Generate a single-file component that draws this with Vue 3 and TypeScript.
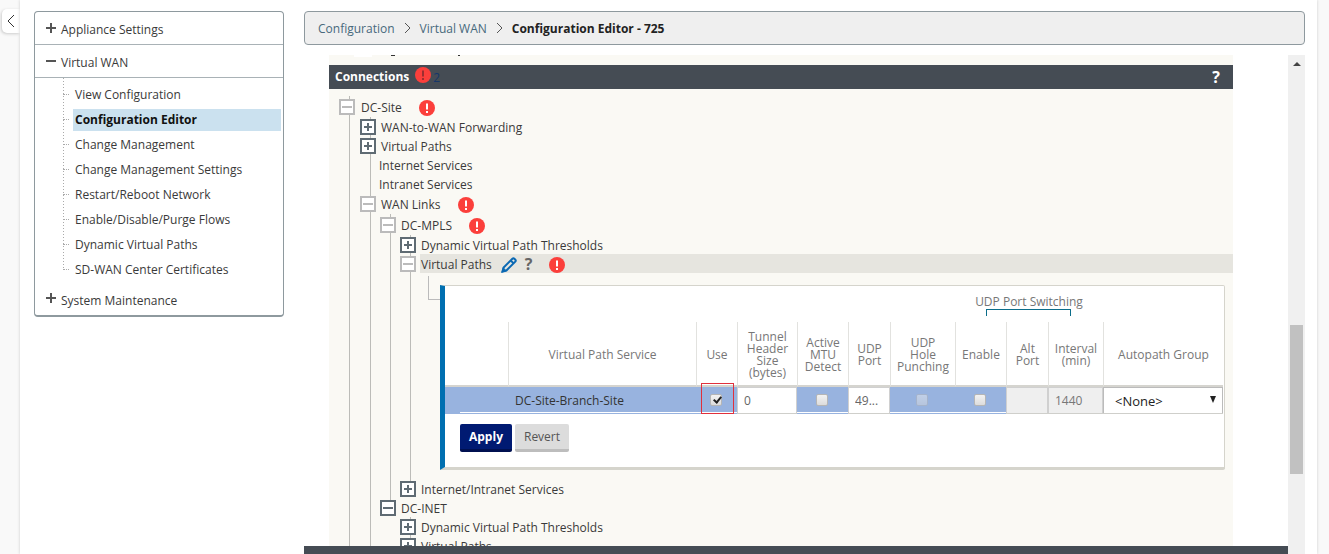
<script setup lang="ts">
import { ref } from 'vue'

type Toggle = 'open' | 'closed' | 'leaf'

interface TreeRow {
  id: string
  label: string
  toggle: Toggle
  /** One entry per ancestor level: true when its guide line runs past this row. */
  guides: boolean[]
  dark?: boolean
  last?: boolean
  tall?: boolean
  error?: boolean
  selected?: boolean
}

const navItems = [
  'View Configuration',
  'Configuration Editor',
  'Change Management',
  'Change Management Settings',
  'Restart/Reboot Network',
  'Enable/Disable/Purge Flows',
  'Dynamic Virtual Paths',
  'SD-WAN Center Certificates',
]
const activeItem = 'Configuration Editor'

const rows: TreeRow[] = [
  { id: 'site', label: 'DC-Site', toggle: 'open', guides: [], tall: true, error: true },
  { id: 'wan2wan', label: 'WAN-to-WAN Forwarding', toggle: 'closed', guides: [true], dark: true },
  { id: 'vpaths', label: 'Virtual Paths', toggle: 'closed', guides: [true], dark: true },
  { id: 'internet', label: 'Internet Services', toggle: 'leaf', guides: [true] },
  { id: 'intranet', label: 'Intranet Services', toggle: 'leaf', guides: [true] },
  { id: 'links', label: 'WAN Links', toggle: 'open', guides: [true], tall: true, error: true },
  { id: 'mpls', label: 'DC-MPLS', toggle: 'open', guides: [true, true], tall: true, error: true },
  { id: 'mpls-dyn', label: 'Dynamic Virtual Path Thresholds', toggle: 'closed', guides: [true, true, true], dark: true },
  { id: 'mpls-vp', label: 'Virtual Paths', toggle: 'open', guides: [true, true, true], error: true, selected: true },
  { id: 'mpls-ii', label: 'Internet/Intranet Services', toggle: 'closed', guides: [true, true, true], dark: true, last: true },
  { id: 'inet', label: 'DC-INET', toggle: 'open', guides: [true, true], dark: true, last: true },
  { id: 'inet-dyn', label: 'Dynamic Virtual Path Thresholds', toggle: 'closed', guides: [true, true, false], dark: true },
  { id: 'inet-vp', label: 'Virtual Paths', toggle: 'closed', guides: [true, true, false], dark: true },
]

const use = ref(true)
const mtu = ref(false)
const udpEnable = ref(false)
const tunnel = ref('0')
const port = ref('49...')
const interval = ref('1440')
const group = ref('<None>')
</script>

<template>
  <div class="page">
    <div class="rail">
      <button class="collapse" type="button" aria-label="Collapse">
        <svg width="8" height="14" viewBox="0 0 8 14"><path d="M7 1 L1 7 L7 13" /></svg>
      </button>
    </div>
    <div class="sheet">
      <nav class="sidebar">
        <button class="section" type="button">
          <svg width="10" height="10" viewBox="0 0 10 10"><path d="M0 5H10M5 0V10" /></svg>
          Appliance Settings
        </button>
        <button class="section open" type="button">
          <svg width="10" height="10" viewBox="0 0 10 10"><path d="M0 5H10" /></svg>
          Virtual WAN
        </button>
        <ul class="items">
          <li v-for="item in navItems" :key="item">
            <a href="#" :class="{ active: item === activeItem }">{{ item }}</a>
          </li>
        </ul>
        <button class="section bottom" type="button">
          <svg width="10" height="10" viewBox="0 0 10 10"><path d="M0 5H10M5 0V10" /></svg>
          System Maintenance
        </button>
      </nav>

      <main class="main">
        <nav class="crumbs" aria-label="Breadcrumb">
          <a href="#">Configuration</a>
          <svg width="7" height="12" viewBox="0 0 7 12"><path d="M1 1 L6 6 L1 11" /></svg>
          <a href="#">Virtual WAN</a>
          <svg width="7" height="12" viewBox="0 0 7 12"><path d="M1 1 L6 6 L1 11" /></svg>
          <strong>Configuration Editor - 725</strong>
        </nav>

        <div class="work">
          <div class="column">
            <div class="viewport">
              <div class="editor">
                <div class="peek">
                  <svg width="140" height="2" viewBox="0 0 140 2">
                    <rect class="patch" x="25" y="0" width="18" height="2" />
                    <path d="M62 0.5H66M129 0.5H131" />
                  </svg>
                </div>
                <div class="bar">
                  <h2>Connections</h2>
                  <svg class="alert dim" width="16" height="16" viewBox="0 0 16 16">
                    <circle cx="8" cy="8" r="8" /><path d="M8 3.5V9.5M8 11V13" />
                  </svg>
                  <span class="count">2</span>
                  <button type="button" class="help" aria-label="Help">?</button>
                </div>

                <div class="tree">
                  <template v-for="row in rows" :key="row.id">
                    <div class="row" :class="{ tall: row.tall }">
                      <span v-for="(on, i) in row.guides" :key="i" class="cell" :class="{ line: on }"></span>
                      <span class="cell line" :class="{ half: row.last, leaf: row.toggle === 'leaf' }">
                        <button
                          v-if="row.toggle !== 'leaf'"
                          type="button"
                          class="toggle"
                          :class="{ dark: row.dark }"
                          :aria-label="row.label"
                        >
                          <svg width="12" height="12" viewBox="0 0 12 12">
                            <path :d="row.toggle === 'open' ? 'M1 6H11' : 'M2 6H10M6 2V10'" />
                          </svg>
                        </button>
                      </span>
                      <div class="label" :class="{ selected: row.selected }">
                        <span>{{ row.label }}</span>
                        <template v-if="row.selected">
                          <button type="button" class="edit" aria-label="Edit">
                            <svg width="16" height="16" viewBox="0 0 16 16">
                              <path d="M1.5 14.5 L2.6 10.6 L11.4 1.8 Q12.4 0.9 13.4 1.8 L14.3 2.7 Q15.2 3.7 14.3 4.6 L5.4 13.5 Z" />
                              <path d="M9.8 3.6 L12.5 6.3" />
                              <path class="tip" d="M1 15 L2.2 10.8 L5.2 13.8 Z" />
                            </svg>
                          </button>
                          <button type="button" class="hint" aria-label="Help">?</button>
                        </template>
                        <svg v-if="row.error" class="alert" width="16" height="16" viewBox="0 0 16 16">
                          <circle cx="8" cy="8" r="8" /><path d="M8 3.5V9.5M8 11V13" />
                        </svg>
                      </div>
                    </div>

                    <div v-if="row.selected" class="row detail">
                      <span v-for="n in 4" :key="n" class="cell line"></span>
                      <span class="cell elbow"></span>
                      <form class="panel" @submit.prevent>
                        <table>
                          <colgroup>
                            <col class="w-lead" /><col /><col class="w-use" /><col class="w-tunnel" />
                            <col class="w-mtu" /><col class="w-port" /><col class="w-hole" /><col class="w-mtu" />
                            <col class="w-port" /><col class="w-int" /><col class="w-group" />
                          </colgroup>
                          <thead>
                            <tr class="span-row">
                              <td colspan="7"></td>
                              <th colspan="3"><span>UDP Port Switching</span><i class="bracket"></i></th>
                              <td></td>
                            </tr>
                            <tr class="heads">
                              <td></td>
                              <th>Virtual Path Service</th>
                              <th>Use</th>
                              <th>Tunnel Header Size (bytes)</th>
                              <th>Active MTU Detect</th>
                              <th>UDP Port</th>
                              <th>UDP<br />Hole<br />Punching</th>
                              <th>Enable</th>
                              <th>Alt Port</th>
                              <th>Interval (min)</th>
                              <th>Autopath Group</th>
                            </tr>
                          </thead>
                          <tbody>
                            <tr>
                              <td class="blue lead"></td>
                              <td class="blue name">DC-Site-Branch-Site</td>
                              <td class="blue mark">
                                <input v-model="use" type="checkbox" aria-label="Use" />
                                <i class="frame"></i>
                              </td>
                              <td><input v-model="tunnel" type="text" aria-label="Tunnel Header Size (bytes)" /></td>
                              <td class="blue"><input v-model="mtu" type="checkbox" aria-label="Active MTU Detect" /></td>
                              <td><input v-model="port" type="text" aria-label="UDP Port" /></td>
                              <td class="blue"><input type="checkbox" disabled aria-label="UDP Hole Punching" /></td>
                              <td class="blue"><input v-model="udpEnable" type="checkbox" aria-label="Enable" /></td>
                              <td><input type="text" disabled aria-label="Alt Port" /></td>
                              <td><input v-model="interval" type="text" disabled aria-label="Interval (min)" /></td>
                              <td class="pick">
                                <select v-model="group" aria-label="Autopath Group"><option>&lt;None&gt;</option></select>
                                <svg width="6" height="7" viewBox="0 0 6 7"><path d="M0 0H6L3 7Z" /></svg>
                              </td>
                            </tr>
                          </tbody>
                        </table>
                        <div class="actions">
                          <button type="submit" class="apply">Apply</button>
                          <button type="reset" class="revert">Revert</button>
                        </div>
                      </form>
                    </div>
                  </template>
                </div>
              </div>
            </div>
            <div class="footer"></div>
          </div>
          <div class="scrollbar">
            <svg width="8" height="4" viewBox="0 0 8 4"><path d="M0 4H8L4 0Z" /></svg>
            <div class="before"></div>
            <div class="thumb"></div>
            <div class="after"></div>
          </div>
        </div>
      </main>
    </div>
  </div>
</template>

<style>
body {
  margin: 0;
  background: #f9f9f9;
}
</style>

<style scoped>
* {
  box-sizing: border-box;
}
.page {
  display: flex;
  height: 100vh;
  overflow: hidden;
  padding-right: 12px;
  font-family: 'Open Sans', 'Noto Sans', sans-serif;
  font-size: 12px;
  color: #3a3a3a;
}
button,
input,
select {
  font: inherit;
  color: inherit;
  margin: 0;
  padding: 0;
  border: 0;
  background: none;
}
svg {
  display: block;
  flex: none;
}
svg path {
  fill: none;
  stroke: #555;
}
a {
  color: inherit;
  text-decoration: none;
}
.rail {
  flex: none;
  width: 20px;
  padding: 9px 0 0 2px;
}
.collapse {
  display: flex;
  align-items: center;
  width: 18px;
  height: 24px;
  padding-left: 5px;
  background: #fff;
  border-radius: 5px 0 0 5px;
  box-shadow: -1px 1px 3px #ccc;
}
.collapse path {
  stroke: #333;
}
.sheet {
  flex: 1;
  min-width: 0;
  display: flex;
  align-items: flex-start;
  gap: 20px;
  padding: 11px 12px 0 14px;
  background: #fff;
  box-shadow: 0 0 3px #ccc;
}
.sidebar {
  flex: none;
  width: 250px;
  border: 1px solid #8e999e;
  border-bottom-width: 2px;
  border-radius: 4px;
}
.section {
  display: flex;
  align-items: center;
  gap: 5px;
  width: 100%;
  height: 33px;
  padding: 3px 0 0 11px;
  border-bottom: 1px solid #a9b2b6;
}
.section path {
  stroke-width: 2;
}
.section svg {
  margin-bottom: 4px;
}
.section.bottom {
  border-bottom: 0;
  height: 30px;
  padding-top: 0;
}
.items {
  list-style: none;
  margin: 0 2px 0 28px;
  padding: 4px 0 3px;
  background: repeating-linear-gradient(#aaa 0 1px, transparent 1px 3px) 0 0 / 1px 191px no-repeat;
}
.items li {
  display: flex;
  align-items: center;
  height: 25px;
}
.items li::before {
  content: '';
  width: 6px;
  margin-right: 4px;
  border-top: 1px dotted #aaa;
}
.items a {
  flex: 1;
  line-height: 22px;
  padding-left: 2px;
}
.items a.active {
  background: #cbe1ef;
  color: #111;
  font-weight: 700;
}
.main {
  flex: 1;
  min-width: 0;
  height: calc(100vh - 11px);
  display: flex;
  flex-direction: column;
  gap: 10px;
}
.crumbs {
  flex: none;
  display: flex;
  align-items: center;
  gap: 9px;
  height: 34px;
  padding-left: 13px;
  border: 1px solid #8e999e;
  border-radius: 4px;
  background: #efefef;
  color: #47697c;
}
.crumbs strong {
  color: #222;
}
.work {
  flex: 1;
  min-height: 0;
  display: flex;
}
.column {
  flex: 1;
  min-width: 0;
  display: flex;
  flex-direction: column;
}
.viewport {
  flex: 1;
  min-height: 0;
  overflow: hidden;
  padding: 0 55px 0 25px;
}
.footer {
  flex: none;
  height: 8px;
  background: #454c54;
}
.editor {
  background: #faf9f4;
}
.peek {
  height: 10px;
}
.peek path {
  stroke: #333;
}
.peek .patch {
  fill: #fff;
}
.bar {
  display: flex;
  align-items: center;
  height: 24px;
  padding: 0 13px 0 6px;
  background: #454c54;
  color: #fff;
}
.bar h2 {
  margin: 0 6px 2px 0;
  font-size: 12px;
}
.bar .alert {
  margin-bottom: 4px;
}
.count {
  margin-left: 2px;
  color: #14366a;
}
.help {
  margin-left: auto;
  font-size: 16px;
  font-weight: 700;
}
.alert {
  fill: #fb3f3b;
}
.alert path {
  stroke: #fff;
  stroke-width: 2;
}
.alert.dim path {
  stroke: #9c2f30;
}
.tree {
  padding: 7px 0 0 10px;
}
.row {
  display: flex;
  height: 19px;
}
.row.tall {
  height: 21px;
}
.cell {
  flex: none;
  display: flex;
  align-items: center;
  width: 20px;
}
.cell:first-child {
  width: 21px;
}
.cell.line {
  background: linear-gradient(#bcbcb8, #bcbcb8) 10px 0 / 1px 100% no-repeat;
}
.cell.half {
  background-size: 1px 10px;
}
.cell.leaf {
  width: 18px;
}
.toggle {
  display: block;
  width: 16px;
  height: 16px;
  border: 2px solid #bbb;
  background: #fff;
}
.toggle path {
  stroke: #bbb;
  stroke-width: 2;
}
.toggle.dark {
  border-color: #5f6b73;
}
.toggle.dark path {
  stroke: #5f6b73;
}
.label {
  flex: 1;
  display: flex;
  align-items: center;
  padding: 2px 0 0 1px;
}
.label .alert {
  margin-left: 17px;
}
.label.selected {
  background: #e6e5df;
}
.edit {
  margin-left: 9px;
}
.edit path {
  stroke: #0b69b3;
  stroke-width: 2;
}
.edit .tip {
  fill: #0b69b3;
  stroke-width: 1;
}
.hint {
  margin-left: 8px;
  color: #666;
  font-size: 16px;
  line-height: 17px;
  font-weight: 700;
}
.row.detail {
  height: auto;
}
.elbow {
  height: 24px;
  width: 12px;
  margin: 3px 0 0 8px;
  border: solid #bbb;
  border-width: 0 0 1px 1px;
}
.panel {
  flex: 1;
  min-width: 0;
  margin: 12px 8px 9px 0;
  padding-bottom: 15px;
  background: #fff;
  border: 1px solid #d5d4cc;
  border-left: 5px solid #006fb0;
  border-bottom-width: 3px;
  border-radius: 0 2px 2px 0;
}
table {
  width: calc(100% - 1px);
  table-layout: fixed;
  border-collapse: separate;
  border-spacing: 0;
}
.w-lead { width: 63px; }
.w-use { width: 41px; }
.w-tunnel { width: 60px; }
.w-mtu { width: 51px; }
.w-port { width: 42px; }
.w-hole { width: 65px; }
.w-int { width: 55px; }
.w-group { width: 120px; }
th,
td {
  padding: 0;
  font-weight: 400;
  color: #777;
  line-height: 12px;
}
.span-row {
  height: 36px;
}
.span-row th {
  vertical-align: bottom;
  padding: 0 0 6px;
}
.span-row span {
  white-space: nowrap;
}
.bracket {
  display: block;
  width: 85px;
  height: 7px;
  margin: 1px auto 0;
  border: 1px solid #0b6d8a;
  border-bottom: 0;
}
.heads {
  height: 65px;
}
.heads th,
.heads td {
  border-bottom: 2px solid #d5d4cf;
}
.heads th {
  padding-top: 2px;
  border-left: 1px solid #e2e2df;
}
tbody td {
  height: 27px;
  text-align: center;
  border-bottom: 1px solid #cfcfcb;
}
tbody .blue {
  background: #98b3df;
  box-shadow: inset 0 -1px #fff;
  border-bottom-color: #98b3df;
}
tbody .lead {
  box-shadow: none;
  background: linear-gradient(#fff, #fff) 15px 100% / 100% 1px no-repeat #98b3df;
}
tbody .name {
  padding: 2px 0 0 7px;
  text-align: left;
  color: #333;
}
.mark {
  position: relative;
}
.frame {
  position: absolute;
  z-index: 1;
  top: -4px;
  left: 5px;
  width: 33px;
  height: 31px;
  border: 1px solid #e0303c;
  pointer-events: none;
}
input[type='text'] {
  display: block;
  width: 100%;
  height: 26px;
  padding-left: 6px;
  border: 1px solid #d0d0d0;
  border-width: 1px 1px 0;
  background: #fff;
  color: #666;
}
input[type='text']:disabled {
  background: #efefef;
  color: #777;
}
input[type='checkbox'] {
  appearance: none;
  display: block;
  width: 12px;
  height: 12px;
  margin: 0 auto;
  border: 1px solid #b5b5b5;
  border-radius: 2px;
  background: linear-gradient(#f2f2f2, #dcdcdc);
}
input[type='checkbox']:disabled {
  opacity: 0.45;
}
input[type='checkbox']:checked {
  position: relative;
}
input[type='checkbox']:checked::after {
  content: '';
  position: absolute;
  left: 4px;
  top: 0;
  width: 3px;
  height: 6px;
  border: solid #222;
  border-width: 0 2px 2px 0;
  transform: rotate(40deg);
}
.pick {
  position: relative;
}
select {
  display: block;
  appearance: none;
  width: 100%;
  height: 26px;
  padding-left: 11px;
  border: 1px solid #bbb;
  border-bottom: 0;
  background: #fff;
  color: #222;
  font-size: 13px;
}
.pick svg {
  position: absolute;
  right: 7px;
  top: 9px;
  pointer-events: none;
}
.pick path {
  fill: #222;
  stroke: none;
}
.actions {
  display: flex;
  gap: 3px;
  padding: 10px 0 0 15px;
}
.actions button {
  height: 28px;
  padding: 0 9px;
  border-radius: 2px;
  border-bottom: 3px solid #001050;
}
.actions .apply {
  background: #001a72;
  color: #fff;
  font-weight: 700;
}
.actions .revert {
  background: #dcdcdc;
  border-bottom-color: #bdbdbd;
  color: #555;
}
.scrollbar {
  flex: none;
  width: 17px;
  padding: 7px 2px 0;
  background: #f0f0f0;
  display: flex;
  flex-direction: column;
}
.scrollbar svg {
  margin: 0 auto 6px;
}
.scrollbar path {
  fill: #444;
  stroke: none;
}
.before {
  flex: 253;
}
.thumb {
  flex: 149;
  background: #c1c1c1;
}
.after {
  flex: 80;
}
</style>
